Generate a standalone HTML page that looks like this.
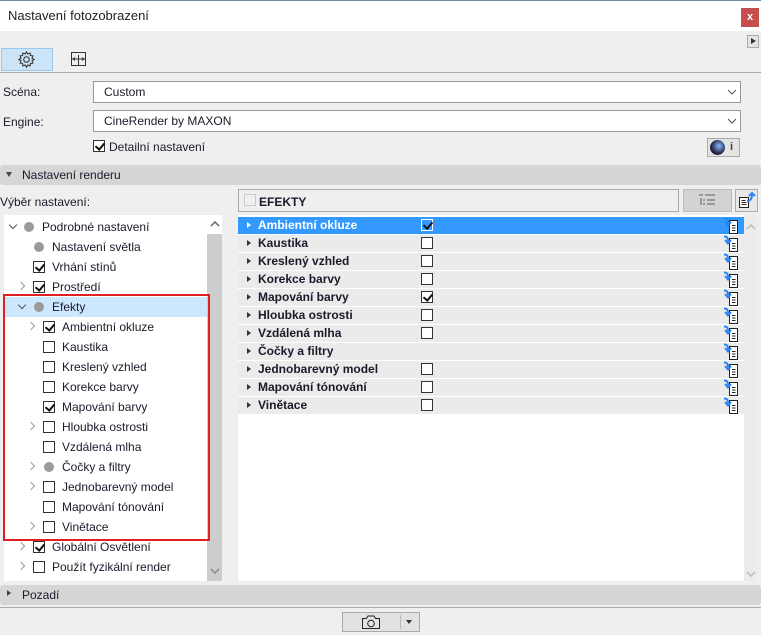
<!DOCTYPE html>
<html><head><meta charset="utf-8"><style>
*{margin:0;padding:0;box-sizing:border-box}
body{width:761px;height:635px;overflow:hidden;background:#efefef;font-family:"Liberation Sans",sans-serif;font-size:12px;color:#1a1a2a;position:relative}
.a{position:absolute}
.cb{position:absolute;width:12px;height:12px;border:1px solid #333;background:#fff}
.cb.k::after{content:"";position:absolute;left:3px;top:0px;width:4px;height:7px;border:solid #111;border-width:0 2px 2px 0;transform:rotate(40deg)}
.dot{position:absolute;width:10px;height:10px;border-radius:50%;background:#9a9a9a}
.chr{position:absolute;width:6px;height:6px;border:solid #999;border-width:0 1.5px 1.5px 0;transform:rotate(-45deg)}
.chd{position:absolute;width:6px;height:6px;border:solid #555;border-width:0 1.5px 1.5px 0;transform:rotate(45deg)}
.t{position:absolute;white-space:nowrap;font-size:12px}
.row{position:absolute;left:238px;width:506px;height:17px;background:#ebebeb}
.row .tri{position:absolute;left:9px;top:5px;border-left:4px solid #333;border-top:3.5px solid transparent;border-bottom:3.5px solid transparent}
.row .t{left:20px;top:1px;font-weight:bold}
.row .cb{left:183px;top:2px}
</style></head><body>
<div class="a" style="left:0;top:0;width:761px;height:1px;background:#6a8aa8"></div>
<div class="a" style="left:0;top:1px;width:761px;height:30px;background:#fff"></div>
<div class="t" style="left:8px;top:8px;font-size:13px;color:#222">Nastavení fotozobrazení</div>
<div class="a" style="left:741px;top:8px;width:18px;height:19px;background:#c84e4e;color:#fff;font-weight:bold;text-align:center;line-height:18px;font-size:11px">x</div>
<div class="a" style="left:747px;top:35px;width:12px;height:13px;border:1px solid #aaa;background:#e4e4e4"></div>
<div class="a" style="left:751px;top:38px;border-left:5px solid #333;border-top:3.5px solid transparent;border-bottom:3.5px solid transparent"></div>
<div class="a" style="left:1px;top:48px;width:52px;height:23px;background:#cce4f7;border:1px solid #99c9ef"></div>
<svg class="a" style="left:18px;top:51px" width="17" height="17" viewBox="0 0 16 16"><circle cx="8" cy="8" r="2.6" fill="none" stroke="#333"/><path d="M8 .8l1.2 2 2.2-.8.3 2.3 2.3.3-.8 2.2 2 1.2-2 1.2.8 2.2-2.3.3-.3 2.3-2.2-.8-1.2 2-1.2-2-2.2.8-.3-2.3-2.3-.3.8-2.2L.8 8l2-1.2-.8-2.2 2.3-.3.3-2.3 2.2.8z" fill="none" stroke="#333" stroke-width="1"/></svg>
<svg class="a" style="left:70px;top:51px" width="17" height="17" viewBox="0 0 17 17"><rect x="1.5" y="1.5" width="14" height="13" fill="none" stroke="#333"/><path d="M1.5 8h14M8.5 4v10M5 6.5l-2 1.5 2 1.5M12 6.5l2 1.5-2 1.5" fill="none" stroke="#333"/></svg>
<div class="a" style="left:0;top:72px;width:761px;height:1px;background:#aaa"></div>
<div class="t" style="left:3px;top:85px">Scéna:</div>
<div class="a" style="left:93px;top:81px;width:648px;height:22px;background:#fff;border:1px solid #999"></div>
<div class="t" style="left:104px;top:85px">Custom</div>
<svg class="a" style="left:727px;top:89px" width="10" height="6"><path d="M1 1l4 4 4-4" stroke="#555" fill="none"/></svg>
<div class="t" style="left:3px;top:115px">Engine:</div>
<div class="a" style="left:93px;top:110px;width:648px;height:22px;background:#fff;border:1px solid #999"></div>
<div class="t" style="left:104px;top:114px">CineRender by MAXON</div>
<svg class="a" style="left:727px;top:118px" width="10" height="6"><path d="M1 1l4 4 4-4" stroke="#555" fill="none"/></svg>
<div class="cb k" style="left:93px;top:140px"></div>
<div class="t" style="left:109px;top:140px">Detailní nastavení</div>
<div class="a" style="left:707px;top:138px;width:33px;height:19px;background:#e4e4e4;border:1px solid #aaa"></div>
<div class="a" style="left:710px;top:140px;width:15px;height:15px;border-radius:50%;background:radial-gradient(circle at 60% 40%,#8bf 0,#224 60%,#112 100%)"></div>
<div class="t" style="left:730px;top:141px;font-weight:bold;font-size:11px;color:#444">i</div>
<div class="a" style="left:0;top:165px;width:761px;height:20px;background:#d6d6d6;border-radius:3px"></div>
<div class="a" style="left:6px;top:172px;border-top:5px solid #444;border-left:3.5px solid transparent;border-right:3.5px solid transparent"></div>
<div class="t" style="left:22px;top:168px">Nastavení renderu</div>
<div class="t" style="left:0;top:195px">Výběr nastavení:</div>
<div class="a" style="left:238px;top:189px;width:441px;height:23px;border:1px solid #aaa;background:#efefef"></div>
<div class="a" style="left:244px;top:194px;width:12px;height:12px;border:1px solid #ccc"></div>
<div class="t" style="left:259px;top:195px;font-weight:bold">EFEKTY</div>
<div class="a" style="left:683px;top:189px;width:49px;height:23px;background:#d3d3d3;border:1px solid #bbb"></div>
<svg class="a" style="left:698px;top:194px" width="18" height="13"><path d="M1 1h4M7 1h10M3 4v7M5 6h2M9 6h8M5 10h2M9 10h8" stroke="#999" stroke-width="2" fill="none"/></svg>
<div class="a" style="left:735px;top:189px;width:23px;height:23px;background:#e8e8e8;border:1px solid #aaa"></div>
<svg class="a" style="left:738px;top:191px" width="18" height="18"><path d="M1.5 6.5h9v10h-9z" fill="#fff" stroke="#222"/><path d="M3.5 9.5h4M3.5 11.5h5M3.5 13.5h5" stroke="#222"/><path d="M9 10c3 0 5-2 5-6M11 5l3-3 3 3" stroke="#2a82f5" stroke-width="2" fill="none"/></svg>

<div class="a" style="left:4px;top:215px;width:218px;height:366px;background:#fff"></div>
<div class="a" style="left:207px;top:234px;width:15px;height:347px;background:#cdcdcd"></div>
<svg class="a" style="left:210px;top:221px" width="10" height="6"><path d="M1 5l4-4 4 4" stroke="#666" stroke-width="1.5" fill="none"/></svg>
<div class="a" style="left:4px;top:297px;width:203px;height:20px;background:#cce8ff"></div>
<div class="a" style="left:3px;top:294px;width:207px;height:247px;border:2px solid #e02020"></div>

<div class="chd" style="left:10px;top:222px"></div><div class="dot" style="left:24px;top:222px"></div><div class="t" style="left:42px;top:220px">Podrobné nastavení</div>
<div class="dot" style="left:34px;top:242px"></div><div class="t" style="left:52px;top:240px">Nastavení světla</div>
<div class="cb k" style="left:33px;top:261px"></div><div class="t" style="left:52px;top:260px">Vrhání stínů</div>
<div class="chr" style="left:18px;top:283px"></div><div class="cb k" style="left:33px;top:281px"></div><div class="t" style="left:52px;top:280px">Prostředí</div>
<div class="chd" style="left:19px;top:302px"></div><div class="dot" style="left:34px;top:302px"></div><div class="t" style="left:52px;top:300px">Efekty</div>
<div class="chr" style="left:28px;top:323px"></div><div class="cb k" style="left:43px;top:321px"></div><div class="t" style="left:62px;top:320px">Ambientní okluze</div>
<div class="cb" style="left:43px;top:341px"></div><div class="t" style="left:62px;top:340px">Kaustika</div>
<div class="cb" style="left:43px;top:361px"></div><div class="t" style="left:62px;top:360px">Kreslený vzhled</div>
<div class="cb" style="left:43px;top:381px"></div><div class="t" style="left:62px;top:380px">Korekce barvy</div>
<div class="cb k" style="left:43px;top:401px"></div><div class="t" style="left:62px;top:400px">Mapování barvy</div>
<div class="chr" style="left:28px;top:423px"></div><div class="cb" style="left:43px;top:421px"></div><div class="t" style="left:62px;top:420px">Hloubka ostrosti</div>
<div class="cb" style="left:43px;top:441px"></div><div class="t" style="left:62px;top:440px">Vzdálená mlha</div>
<div class="chr" style="left:28px;top:463px"></div><div class="dot" style="left:44px;top:462px"></div><div class="t" style="left:62px;top:460px">Čočky a filtry</div>
<div class="chr" style="left:28px;top:483px"></div><div class="cb" style="left:43px;top:481px"></div><div class="t" style="left:62px;top:480px">Jednobarevný model</div>
<div class="cb" style="left:43px;top:501px"></div><div class="t" style="left:62px;top:500px">Mapování tónování</div>
<div class="chr" style="left:28px;top:523px"></div><div class="cb" style="left:43px;top:521px"></div><div class="t" style="left:62px;top:520px">Vinětace</div>
<div class="chr" style="left:18px;top:543px"></div><div class="cb k" style="left:33px;top:541px"></div><div class="t" style="left:52px;top:540px">Globální Osvětlení</div>
<div class="chr" style="left:18px;top:563px"></div><div class="cb" style="left:33px;top:561px"></div><div class="t" style="left:52px;top:560px">Použít fyzikální render</div>
<svg class="a" style="left:210px;top:568px" width="10" height="6"><path d="M1 1l4 4 4-4" stroke="#888" stroke-width="1.5" fill="none"/></svg>

<div class="a" style="left:238px;top:215px;width:506px;height:366px;background:#fff"></div>
<div class="a" style="left:744px;top:215px;width:13px;height:366px;background:#ececec"></div>
<svg class="a" style="left:746px;top:571px" width="10" height="6"><path d="M1 1l4 4 4-4" stroke="#bbb" stroke-width="1.5" fill="none"/></svg>
<svg class="a" style="left:746px;top:224px" width="10" height="6"><path d="M1 5l4-4 4 4" stroke="#bbb" stroke-width="1.5" fill="none"/></svg>

<div class="row" style="top:217px;background:#3399ff"><div class="tri" style="border-left-color:#fff"></div><div class="t" style="color:#fff">Ambientní okluze</div><div class="cb k" style="background:#3399ff;border-color:#fff"></div></div>
<div class="row" style="top:235px"><div class="tri"></div><div class="t">Kaustika</div><div class="cb"></div></div>
<div class="row" style="top:253px"><div class="tri"></div><div class="t">Kreslený vzhled</div><div class="cb"></div></div>
<div class="row" style="top:271px"><div class="tri"></div><div class="t">Korekce barvy</div><div class="cb"></div></div>
<div class="row" style="top:289px"><div class="tri"></div><div class="t">Mapování barvy</div><div class="cb k"></div></div>
<div class="row" style="top:307px"><div class="tri"></div><div class="t">Hloubka ostrosti</div><div class="cb"></div></div>
<div class="row" style="top:325px"><div class="tri"></div><div class="t">Vzdálená mlha</div><div class="cb"></div></div>
<div class="row" style="top:343px"><div class="tri"></div><div class="t">Čočky a filtry</div></div>
<div class="row" style="top:361px"><div class="tri"></div><div class="t">Jednobarevný model</div><div class="cb"></div></div>
<div class="row" style="top:379px"><div class="tri"></div><div class="t">Mapování tónování</div><div class="cb"></div></div>
<div class="row" style="top:397px"><div class="tri"></div><div class="t">Vinětace</div><div class="cb"></div></div>

<svg class="a" style="left:723px;top:217px" width="18" height="198">
<defs><g id="d"><path d="M6.5 3.5h8v13h-8z" fill="#fff" stroke="#222"/><path d="M9 8.5h3.5M9 11h3.5M9 13.5h3.5" stroke="#222"/><path d="M1 1.5c3 0 4 1 4 5M2 5l3 3.5 3-3.5" stroke="#2a82f5" stroke-width="2" fill="none"/></g></defs>
<use href="#d" y="0"/><use href="#d" y="18"/><use href="#d" y="36"/><use href="#d" y="54"/><use href="#d" y="72"/><use href="#d" y="90"/><use href="#d" y="108"/><use href="#d" y="126"/><use href="#d" y="144"/><use href="#d" y="162"/><use href="#d" y="180"/>
</svg>

<div class="a" style="left:0;top:585px;width:761px;height:20px;background:#d6d6d6;border-radius:3px"></div>
<div class="a" style="left:7px;top:590px;border-left:4px solid #444;border-top:3.5px solid transparent;border-bottom:3.5px solid transparent"></div>
<div class="t" style="left:22px;top:588px">Pozadí</div>
<div class="a" style="left:0;top:607px;width:761px;height:1px;background:#aaa"></div>
<div class="a" style="left:342px;top:612px;width:78px;height:20px;background:#e2e2e2;border:1px solid #aaa"></div>
<svg class="a" style="left:361px;top:614px" width="20" height="16"><path d="M1.5 4.5h4l1.5-2.5h6l1.5 2.5h4v10h-17z" fill="none" stroke="#222"/><circle cx="10" cy="9.5" r="3.3" fill="none" stroke="#222"/></svg>
<div class="a" style="left:400px;top:615px;width:1px;height:14px;background:#bbb"></div>
<div class="a" style="left:406px;top:620px;border-top:4px solid #333;border-left:3.5px solid transparent;border-right:3.5px solid transparent"></div>
</body></html>
